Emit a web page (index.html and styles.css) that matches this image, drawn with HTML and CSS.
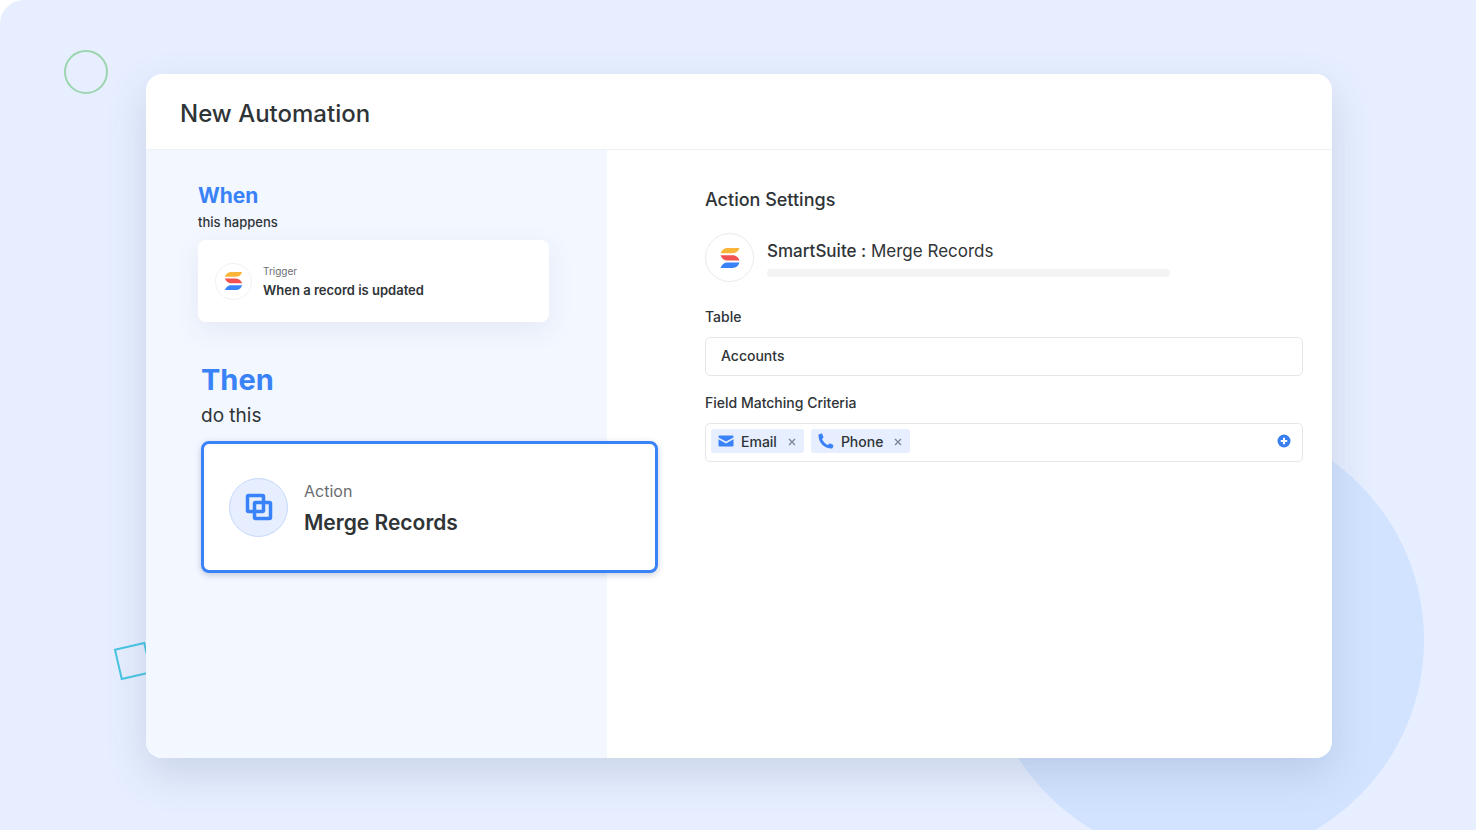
FILE: index.html
```html
<!DOCTYPE html>
<html lang="en">
<head>
<meta charset="utf-8">
<meta name="viewport" content="width=device-width, initial-scale=1">
<title>New Automation</title>
<link rel="stylesheet" href="styles.css">
</head>
<body>
<svg class="symbols" aria-hidden="true">
  <symbol id="suite-logo" viewBox="0 0 20 22">
    <path fill="#f9b43a" d="M.500 6.200C2 3 4 1 7.500 1H19.500C18.500 4.200 16.200 6.200 12.500 6.200Z"/>
    <path fill="#f2524f" d="M.500 8.200H12.500C16.200 8.200 18.500 10.600 19.500 13.600H7.500C4.200 13.600 1.800 11.600.500 8.200Z"/>
    <path fill="#3a82f7" d="M.500 21C2 17.500 4 15.600 7.500 15.600H19.500C18.500 18.800 16.200 21 12.500 21Z"/>
  </symbol>
</svg>
<div class="stage">
  <div class="deco deco-disc"></div>
  <div class="deco deco-ring"></div>
  <div class="deco deco-square"></div>
  <main class="window">
    <header class="window-header">
      <h1 class="window-title">New Automation</h1>
    </header>
    <div class="window-body">
      <section class="flow">
        <div class="step">
          <h2 class="step-title">When</h2>
          <p class="step-note">this happens</p>
          <article class="step-card">
            <span class="badge badge-small"><svg class="logo-small"><use href="#suite-logo"/></svg></span>
            <div class="step-text">
              <p class="step-kind">Trigger</p>
              <h3 class="step-name">When a record is updated</h3>
            </div>
          </article>
        </div>
        <div class="step step-active">
          <h2 class="step-title">Then</h2>
          <p class="step-note">do this</p>
          <article class="step-card">
            <span class="badge badge-action">
              <svg class="merge-icon" viewBox="0 0 28 28" fill="none" stroke="#3a82f7" stroke-width="3.500">
                <rect x="2.500" y="2.500" width="16" height="16" rx="1"/>
                <rect x="9.500" y="9.500" width="16" height="16" rx="1"/>
              </svg>
            </span>
            <div class="step-text">
              <p class="step-kind">Action</p>
              <h3 class="step-name">Merge Records</h3>
            </div>
          </article>
        </div>
      </section>
      <section class="settings">
        <h2 class="settings-title">Action Settings</h2>
        <div class="app">
          <span class="badge badge-app"><svg class="logo-large"><use href="#suite-logo"/></svg></span>
          <div class="app-text">
            <p class="app-name"><strong class="app-brand">SmartSuite :</strong> Merge Records</p>
            <div class="app-line"></div>
          </div>
        </div>
        <label class="label" for="table">Table</label>
        <input class="box text-box" id="table" type="text" value="Accounts">
        <div class="label" id="criteria">Field Matching Criteria</div>
        <div class="box tag-box" role="group" aria-labelledby="criteria">
          <span class="tag">
            <svg class="tag-icon" viewBox="0 0 16 16" fill="#3a82f7"><path d="M1.500 2.500h13a1 1 0 0 1 1 1v1L8 8.600.500 4.500v-1a1 1 0 0 1 1-1z"/><path d="M.500 6.300 8 10.400l7.500-4.100v6.200a1 1 0 0 1-1 1h-13a1 1 0 0 1-1-1z"/></svg>
            Email
            <button class="tag-remove" type="button" aria-label="Remove Email"><svg class="cross" viewBox="0 0 8 8"><path d="M1 1l6 6M7 1L1 7"/></svg></button>
          </span>
          <span class="tag">
            <svg class="tag-icon" viewBox="0 0 16 16" fill="#3a82f7"><path d="M1.200 1.300 3.300.500c.4-.1.800.1 1 .5l1.100 2.800c.2.400.1.800-.3 1.100L4 6c1 2.500 3.200 4.800 6 6l1.100-1.200c.3-.3.700-.4 1.100-.3l2.700 1.200c.4.200.6.600.5 1l-.7 2.100c-.1.400-.5.700-.9.700C6.300 15.500.500 9.700.500 2.300c0-.5.300-.9.700-1z"/></svg>
            Phone
            <button class="tag-remove" type="button" aria-label="Remove Phone"><svg class="cross" viewBox="0 0 8 8"><path d="M1 1l6 6M7 1L1 7"/></svg></button>
          </span>
          <button class="add" type="button" aria-label="Add field"><svg class="add-icon" viewBox="0 0 14 14"><circle cx="7" cy="7" r="6.500" fill="#3a7ff0"/><path d="M7 3.800v6.400M3.800 7h6.400" stroke="#fff" stroke-width="2"/></svg></button>
        </div>
      </section>
    </div>
  </main>
</div>
</body>
</html>
```
FILE: styles.css
```css
* {
  box-sizing: border-box;
}

body,
h1,
h2,
h3,
p {
  margin: 0;
}

body {
  background: #fff;
  color: #2f3437;
  font-family: Inter, "Liberation Sans", sans-serif;
}

button {
  display: flex;
  padding: 0;
  border: 0;
  background: none;
  cursor: pointer;
}

.symbols {
  position: absolute;
  width: 0;
  height: 0;
}

.stage {
  position: relative;
  display: grid;
  min-height: 100vh;
  padding: 74px 144px 72px 146px;
  overflow: hidden;
  border-top-left-radius: 24px;
  background: #e6eeff;
}

/* Background shapes */
.deco {
  position: absolute;
}

.deco-disc {
  right: 52px;
  top: 420px;
  width: 440px;
  height: 440px;
  border-radius: 50%;
  background: #d2e3ff;
}

.deco-ring {
  left: 64px;
  top: 50px;
  width: 44px;
  height: 44px;
  border: 2px solid #9bd5ae;
  border-radius: 50%;
}

.deco-square {
  left: 117px;
  top: 645px;
  width: 32px;
  height: 32px;
  border: 2px solid #47c5e3;
  transform: rotate(-13deg);
}

/* Window */
.window {
  position: relative;
  display: flex;
  flex-direction: column;
  border-radius: 16px;
  background: #fff;
  box-shadow: 0 16px 40px rgba(80, 100, 130, 0.18);
}

.window-header {
  padding: 24px 34px 19px;
  border-bottom: 1px solid #eef0f5;
}

.window-title {
  font-size: 24px;
  font-weight: 500;
  line-height: 32px;
}

.window-body {
  display: grid;
  flex: 1;
  grid-template-columns: minmax(0, 461fr) minmax(0, 725fr);
}

/* Flow column */
.flow {
  display: flex;
  flex-direction: column;
  gap: 36px;
  padding: 30px 52px;
  border-bottom-left-radius: 16px;
  background: #f3f7ff;
}

.step-title {
  color: #3a82f7;
  font-size: 21px;
  font-weight: 700;
  line-height: 32px;
}

.step-note {
  font-size: 13px;
  font-weight: 500;
  line-height: 20px;
}

.step-card {
  display: flex;
  align-items: center;
  gap: 11px;
  width: 351px;
  margin-top: 8px;
  padding: 22px 17px;
  border-radius: 8px;
  background: #fff;
  box-shadow: 0 8px 28px rgba(60, 70, 120, 0.08);
}

.step-kind {
  color: #6a6d70;
  font-size: 10px;
  line-height: 18px;
}

.step-name {
  font-size: 13px;
  font-weight: 600;
  line-height: 20px;
}

.step-active {
  position: relative;
  padding-left: 3px;
}

.step-active .step-title {
  font-size: 29px;
  line-height: 44px;
}

.step-active .step-note {
  font-size: 19px;
  font-weight: 400;
  line-height: 28px;
}

.step-active .step-card {
  gap: 16px;
  width: 457px;
  margin-top: 11px;
  padding: 31px 25px;
  border: 3px solid #3a82f7;
  box-shadow: 0 2px 6px rgba(40, 60, 110, 0.25);
}

.step-active .step-kind {
  font-size: 16px;
  line-height: 32px;
}

.step-active .step-name {
  font-size: 21px;
  line-height: 32px;
}

/* Icon badges */
.badge {
  display: flex;
  flex-shrink: 0;
  align-items: center;
  justify-content: center;
  border: 1px solid #f1f1f3;
  border-radius: 50%;
  background: #fff;
}

.badge-small {
  width: 37px;
  height: 37px;
}

.badge-app {
  width: 49px;
  height: 49px;
  border-color: #ebebed;
}

.badge-action {
  width: 59px;
  height: 59px;
  border-color: #c6d9fb;
  background: #e6eeff;
}

.logo-small {
  width: 19px;
  height: 20px;
}

.logo-large {
  width: 20px;
  height: 22px;
}

.merge-icon {
  width: 28px;
  height: 28px;
}

/* Settings column */
.settings {
  padding: 34px 29px 34px 98px;
}

.settings-title {
  font-size: 18px;
  font-weight: 500;
  line-height: 32px;
}

.app {
  display: flex;
  gap: 13px;
  margin: 17px 0 25px;
}

.app-text {
  flex: 0 1 403px;
}

.app-name {
  margin-top: 4px;
  font-size: 17px;
  line-height: 28px;
}

.app-brand {
  font-weight: 500;
}

.app-line {
  height: 8px;
  margin-top: 4px;
  border-radius: 4px;
  background: #f3f3f4;
}

.label {
  display: block;
  font-size: 14px;
  font-weight: 500;
  line-height: 20px;
}

.box {
  display: flex;
  width: 100%;
  height: 39px;
  margin: 10px 0 17px;
  border: 1px solid #e6e6e8;
  border-radius: 5px;
  background: #fff;
}

.text-box {
  padding: 0 15px 2px;
  color: inherit;
  font-family: inherit;
  font-size: 14px;
  font-weight: 500;
}

.tag-box {
  align-items: center;
  gap: 7px;
  padding: 0 11px 3px 5px;
}

.tag {
  display: flex;
  align-items: center;
  height: 24px;
  padding: 0 8px 0 7px;
  border-radius: 3px;
  background: #e6eeff;
  font-size: 14px;
  font-weight: 500;
}

.tag-icon {
  width: 16px;
  height: 16px;
  margin-right: 7px;
}

.tag-remove {
  margin: 2px 0 0 11px;
}

.cross {
  width: 8px;
  height: 8px;
  stroke: #7b8799;
  stroke-width: 1.4;
}

.add {
  margin-left: auto;
}

.add-icon {
  width: 14px;
  height: 14px;
}
```
